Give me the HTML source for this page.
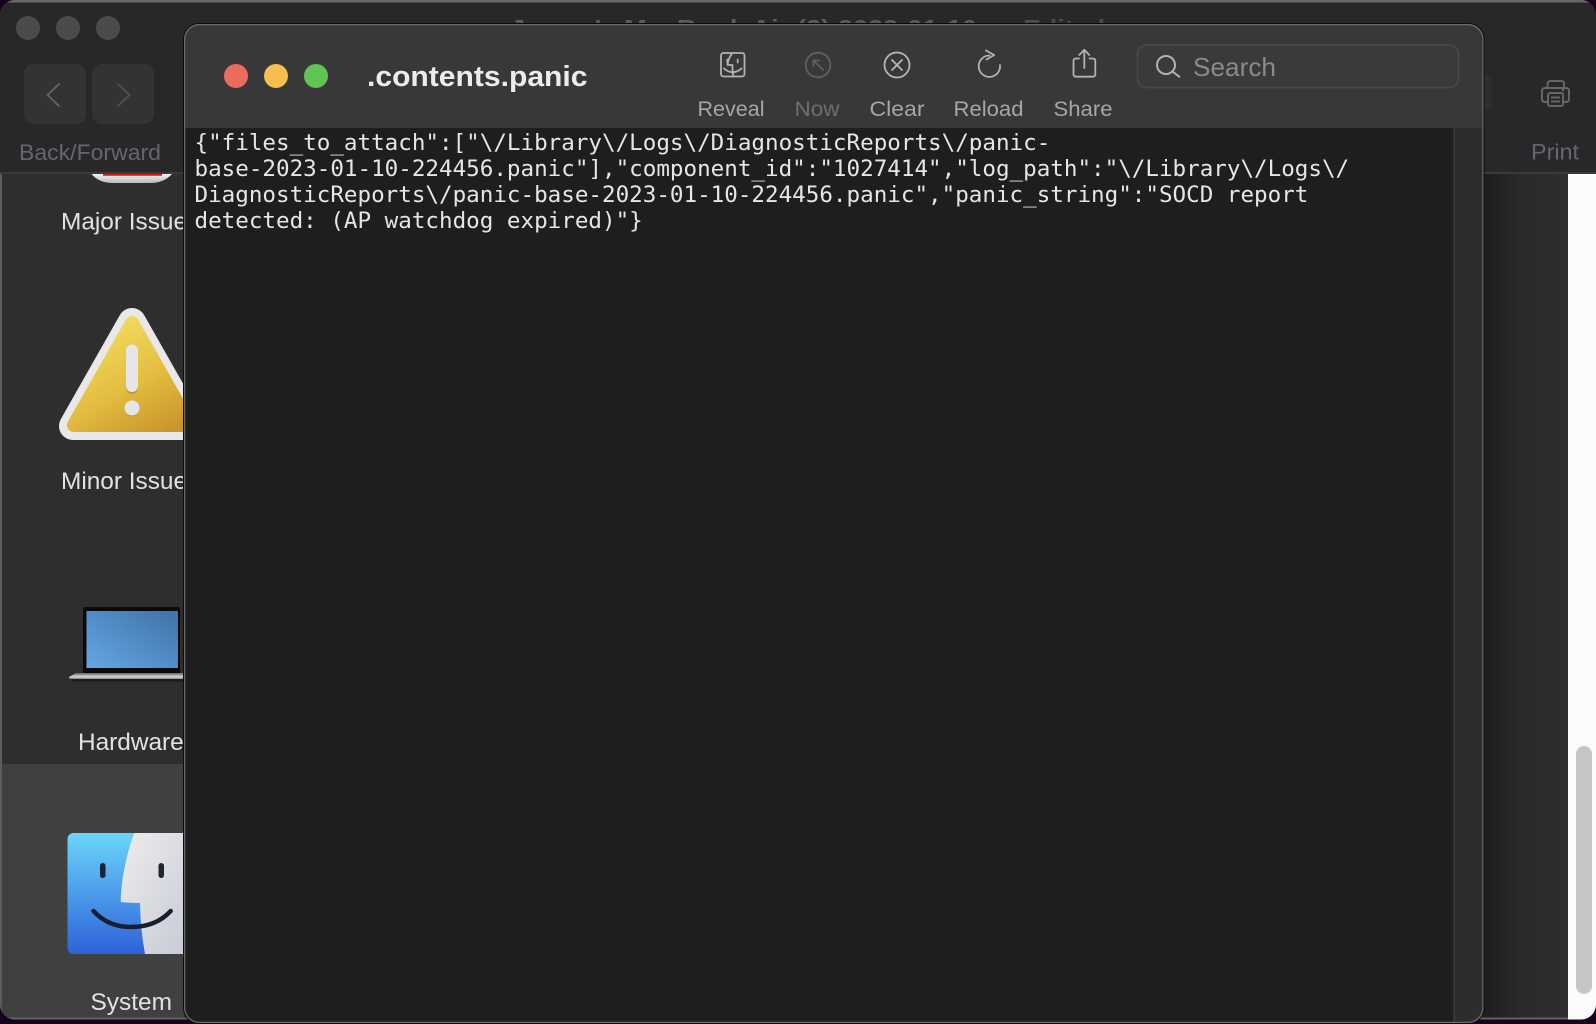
<!DOCTYPE html>
<html><head><meta charset="utf-8"><title>.contents.panic</title>
<style>
html,body{margin:0;padding:0;background:#16041f;width:1596px;height:1024px;overflow:hidden}
svg{display:block}
text{font-family:"Liberation Sans",sans-serif}
.mono{font-family:"DejaVu Sans Mono","Liberation Mono",monospace;font-size:22.57px;fill:#e6e6e6}
.lb{font-size:21.5px;fill:#a6a6a6;text-anchor:middle}
.sb{font-size:24.4px;fill:#e2e2e2}
</style></head><body>
<svg width="1596" height="1024" viewBox="0 0 1596 1024" xmlns="http://www.w3.org/2000/svg">
<defs>
<clipPath id="o"><rect x="0" y="0" width="1596" height="1019.500" rx="15"/></clipPath>
<clipPath id="i"><rect x="184" y="24" width="1299.500" height="999" rx="15"/></clipPath>
<linearGradient id="sh" x1="0" x2="1" y1="0" y2="0"><stop offset="0" stop-color="#1c1c1c"/><stop offset=".45" stop-color="#2a2a2a"/><stop offset="1" stop-color="#2e2e2e"/></linearGradient>
<linearGradient id="yl" gradientUnits="userSpaceOnUse" x1="110" y1="316" x2="170" y2="432"><stop offset="0" stop-color="#f2de60"/><stop offset=".55" stop-color="#e3bd40"/><stop offset="1" stop-color="#c9952c"/></linearGradient>
<linearGradient id="scr" x1="0" x2="1" y1="1" y2="0"><stop offset="0" stop-color="#65a6e4"/><stop offset="1" stop-color="#3f72a8"/></linearGradient>
<linearGradient id="blue" x1="0" x2="0" y1="0" y2="1"><stop offset="0" stop-color="#6bd5fb"/><stop offset="1" stop-color="#2f62da"/></linearGradient>
<linearGradient id="wh" x1="0" x2="1" y1="0" y2="1"><stop offset="0" stop-color="#ededed"/><stop offset="1" stop-color="#c4c8d4"/></linearGradient>
<linearGradient id="base" x1="0" x2="0" y1="0" y2="1"><stop offset="0" stop-color="#5e5e5e"/><stop offset=".6" stop-color="#d8d8d8"/><stop offset="1" stop-color="#8a8a8a"/></linearGradient>
<linearGradient id="maj" x1="0" x2="0" y1="0" y2="1"><stop offset="0" stop-color="#f2f2f2"/><stop offset="1" stop-color="#b9b9b9"/></linearGradient>
</defs>

<rect width="1596" height="1024" fill="#16041f"/>
<g clip-path="url(#o)">
  <rect x="0" y="0" width="1596" height="1020" fill="#2e2e2e"/>
  <rect x="1483" y="173" width="85" height="850" fill="url(#sh)"/>
  <rect x="0" y="764" width="184" height="256" fill="#404040"/>
  <rect x="0" y="0" width="2" height="1020" fill="#5c5c5c"/>
  <rect x="0" y="1017.500" width="1568" height="2" fill="#626262"/>
  <rect x="1568" y="174" width="28" height="846" fill="#fbfbfb"/>
  <rect x="1576" y="746" width="16" height="248" rx="8" fill="#c6c6c6"/>

  <!-- toolbar of back window -->
  <rect x="0" y="0" width="1596" height="173" fill="#29272a"/>
  <rect x="0" y="172" width="1596" height="2" fill="#3a3a3a"/>
  <rect x="0" y="0" width="1596" height="2.500" fill="#69676a"/>
  <circle cx="28" cy="28" r="12" fill="#4c4a4d"/><circle cx="68" cy="28" r="12" fill="#4c4a4d"/><circle cx="108" cy="28" r="12" fill="#4c4a4d"/>
  <rect x="24" y="64" width="62" height="60" rx="10" fill="#343235"/>
  <rect x="92" y="64" width="62" height="60" rx="10" fill="#343235"/>
  <path d="M59 84 L47.500 95 L59 106" fill="none" stroke="#656366" stroke-width="1.900" stroke-linecap="round" stroke-linejoin="round"/>
  <path d="M118 84 L129.500 95 L118 106" fill="none" stroke="#524f53" stroke-width="1.900" stroke-linecap="round" stroke-linejoin="round"/>
  <text x="19" y="160" font-size="22" fill="#68666a" textLength="142" lengthAdjust="spacingAndGlyphs">Back/Forward</text>
  <text x="510" y="36" font-size="23" font-weight="700" fill="#5d5b5e" textLength="467" lengthAdjust="spacingAndGlyphs">James's MacBook Air (2) 2023-01-10</text>
  <text x="1023" y="36" font-size="23" font-weight="700" fill="#4d4b4e" textLength="82" lengthAdjust="spacingAndGlyphs">Edited</text>
  <rect x="1400" y="74" width="92" height="37" rx="9" fill="#2f2d30"/>
  <g fill="none" stroke="#676568" stroke-width="2">
    <path d="M1547.500 88 V84 Q1547.500 81 1551 81 H1561 Q1564 81 1564 84 V88"/>
    <path d="M1548 102 H1545 Q1542 102 1542 99 V91 Q1542 88 1545 88 H1566 Q1569 88 1569 91 V99 Q1569 102 1566 102 H1563"/>
    <rect x="1548" y="93" width="15" height="13" rx="2"/>
    <path d="M1551 97.500 H1560 M1551 101.500 H1560"/>
  </g>
  <circle cx="1563" cy="90" r="1.300" fill="#676568"/>
  <text x="1531" y="159.500" font-size="22" fill="#68666a" textLength="48" lengthAdjust="spacingAndGlyphs">Print</text>

  <!-- sidebar -->
  <path d="M91.500 174 H172 Q164 183 150 183 H113 Q99 183 91.500 174Z" fill="url(#maj)"/>
  <rect x="103" y="174" width="59" height="1.800" fill="#d0201a"/>
  <text class="sb" x="61" y="229.500">Major Issue</text>

  <path d="M132 322 L73 426 H191Z" fill="#e8e8e8" stroke="#e8e8e8" stroke-width="28" stroke-linejoin="round"/>
  <path d="M132 323 L74 425 H190Z" fill="url(#yl)" stroke="url(#yl)" stroke-width="14" stroke-linejoin="round"/>
  <rect x="126" y="345" width="12" height="49" rx="6" fill="#a8842c" opacity=".6"/>
  <rect x="126" y="344.500" width="12" height="47.500" rx="6" fill="#e6e6e6"/>
  <circle cx="132" cy="409" r="7.500" fill="#a8842c" opacity=".6"/>
  <circle cx="132" cy="408" r="7.500" fill="#e6e6e6"/>
  <text class="sb" x="61" y="489">Minor Issue</text>

  <rect x="83" y="607" width="97" height="67" rx="2.500" fill="#0a0a0a"/>
  <rect x="86.500" y="611" width="91.500" height="57" fill="url(#scr)"/>
  <path d="M76 673 H196 V679 H73 Q68 679 69 677Z" fill="url(#base)"/>
  <rect x="72" y="679" width="124" height="2.500" fill="#1c1c1c"/>
  <text class="sb" x="78" y="750">Hardware</text>

  <rect x="67.500" y="833" width="130" height="121" rx="6" fill="url(#blue)"/>
  <path d="M134.500 833 C128 848 120.700 880 120.700 902 Q130 903 140 903 Q140.500 930 145 954 H197.500 V833Z" fill="url(#wh)"/>
  <rect x="100" y="863" width="5.500" height="15" rx="2.750" fill="#16233c"/>
  <rect x="158.500" y="863" width="5.500" height="15" rx="2.750" fill="#23262e"/>
  <path d="M93.500 911 Q108 927 131 927 Q156 927 170.700 911" fill="none" stroke="#16202f" stroke-width="4.500" stroke-linecap="round"/>
  <text class="sb" x="90.500" y="1010" textLength="81.500" lengthAdjust="spacingAndGlyphs">System</text>
</g>

<!-- front window -->
<rect x="183" y="23" width="1301.500" height="1001" rx="16" fill="#0c0c0c"/>
<g clip-path="url(#i)">
  <rect x="184" y="24" width="1300" height="1000" fill="#1e1e1e"/>
  <rect x="184" y="24" width="1300" height="104" fill="#383838"/>
  <rect x="1454" y="128" width="30" height="896" fill="#2d2d2d"/>
  <rect x="1453.500" y="128" width="1" height="896" fill="#464646"/>
  <rect x="184.500" y="24.500" width="1298.500" height="998" rx="15" fill="none" stroke="#6a6a6a" stroke-width="1.500"/>

  <circle cx="236" cy="76" r="12" fill="#ec6a5e"/><circle cx="276" cy="76" r="12" fill="#f4bf4f"/><circle cx="316" cy="76" r="12" fill="#61c554"/>
  <text x="367" y="86" font-size="29" font-weight="700" fill="#ececec" textLength="220.500" lengthAdjust="spacingAndGlyphs">.contents.panic</text>

  <!-- Reveal -->
  <g fill="none" stroke="#b2b2b2" stroke-width="1.800" stroke-linecap="round" stroke-linejoin="round">
    <rect x="721" y="53" width="23.500" height="23.500" rx="2.500"/>
    <path d="M732 53.500 Q728 59 727.500 65 H732.500 Q732.200 71 733.300 76"/>
    <path d="M727.300 59.500 V62.500 M737.700 59.500 V62.500"/>
    <path d="M724 68.500 Q732.500 76 741.500 68.500"/>
  </g>
  <!-- Now -->
  <g fill="none" stroke="#5f5f5f" stroke-width="1.800" stroke-linecap="round" stroke-linejoin="round">
    <circle cx="818" cy="65" r="12.300"/>
    <path d="M823 70 L813.500 60.500 M813.500 66 V60.500 H819"/>
  </g>
  <!-- Clear -->
  <g fill="none" stroke="#b6b6b6" stroke-width="1.800" stroke-linecap="round">
    <circle cx="897" cy="65" r="12.500"/>
    <path d="M892 60 L902 70 M902 60 L892 70"/>
  </g>
  <!-- Reload -->
  <g fill="none" stroke="#b2b2b2" stroke-width="1.800" stroke-linecap="round" stroke-linejoin="round">
    <path d="M989.500 55.500 A10.700 10.700 0 1 0 1000 65"/>
    <path d="M986 50.500 L994.200 55 L986.500 59.500"/>
  </g>
  <!-- Share -->
  <g fill="none" stroke="#b2b2b2" stroke-width="1.800" stroke-linecap="round" stroke-linejoin="round">
    <path d="M1079 58.500 H1076 Q1073.500 58.500 1073.500 61 V74 Q1073.500 76.700 1076 76.700 H1092.700 Q1095.300 76.700 1095.300 74 V61 Q1095.300 58.500 1092.700 58.500 H1089.500"/>
    <path d="M1084.300 68 V50 M1079.300 55 L1084.300 49.800 L1089.300 55"/>
  </g>
  <g class="labels">
    <text class="lb" x="731" y="116" textLength="67" lengthAdjust="spacingAndGlyphs">Reveal</text>
    <text class="lb" x="817" y="116" style="fill:#6e6e6e" textLength="45" lengthAdjust="spacingAndGlyphs">Now</text>
    <text class="lb" x="897" y="116" textLength="55" lengthAdjust="spacingAndGlyphs">Clear</text>
    <text class="lb" x="988.500" y="116" textLength="70" lengthAdjust="spacingAndGlyphs">Reload</text>
    <text class="lb" x="1083" y="116" textLength="59" lengthAdjust="spacingAndGlyphs">Share</text>
  </g>
  <!-- Search -->
  <rect x="1137.500" y="45" width="321" height="42.500" rx="9" fill="#3a3a3a" stroke="#484848" stroke-width="1.800"/>
  <g fill="none" stroke="#b2b2b2" stroke-width="2" stroke-linecap="round">
    <circle cx="1166" cy="65" r="9"/>
    <path d="M1172.500 71.500 L1179.300 76.700"/>
  </g>
  <text x="1193" y="76" font-size="26" fill="#8a8a8a" textLength="83" lengthAdjust="spacingAndGlyphs">Search</text>

  <!-- body text -->
  <text class="mono" x="194.500" y="150">{"files_to_attach":["\/Library\/Logs\/DiagnosticReports\/panic-</text>
  <text class="mono" x="194.500" y="176">base-2023-01-10-224456.panic"],"component_id":"1027414","log_path":"\/Library\/Logs\/</text>
  <text class="mono" x="194.500" y="202">DiagnosticReports\/panic-base-2023-01-10-224456.panic","panic_string":"SOCD report</text>
  <text class="mono" x="194.500" y="228">detected: (AP watchdog expired)"}</text>
</g>
</svg>
</body></html>
